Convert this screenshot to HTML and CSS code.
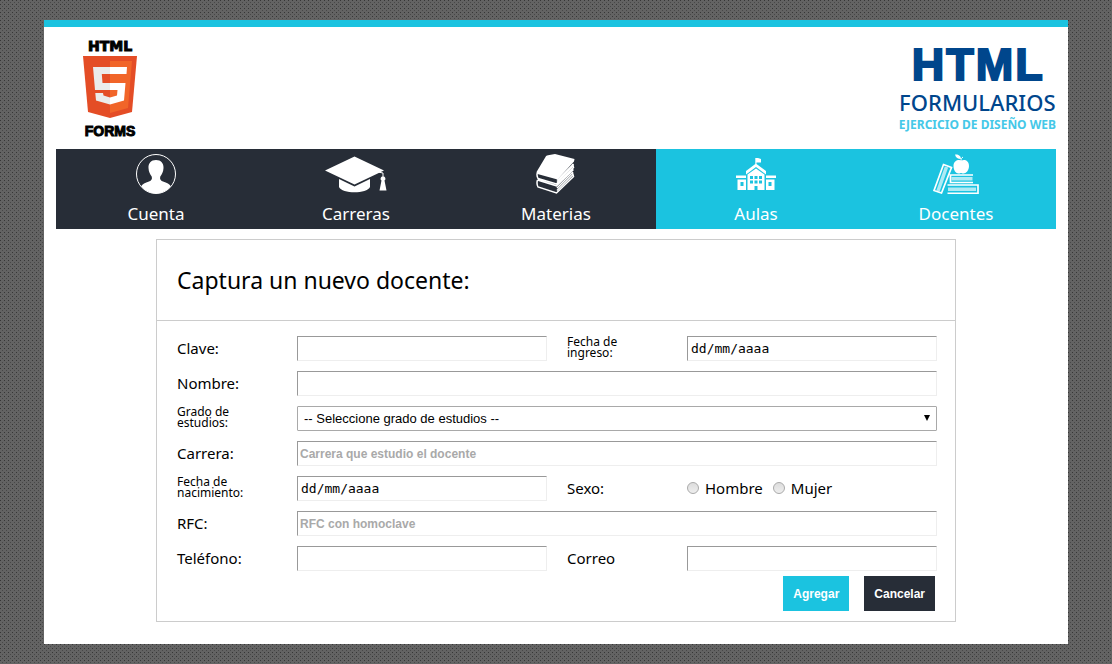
FILE: index.html
```
<!DOCTYPE html>
<html lang="es">
<head>
<meta charset="utf-8">
<meta name="viewport" content="width=device-width, initial-scale=1">
<title>HTML Formularios</title>
<link rel="stylesheet" href="styles.css">
</head>
<body>
<div class="page">
  <header class="header">
    <svg class="logo" viewBox="0 0 56 98" role="img" aria-label="HTML5 Forms">
      <text class="logo-top" x="28" y="11" text-anchor="middle">HTML</text>
      <path fill="#e44d26" d="M1 16H55L50 72L28 78L6 72Z"/>
      <path fill="#f16529" d="M28 21H50L46 68L28 73Z"/>
      <path fill="#ebebeb" d="M28 27H11L13 50H28V43H20.500L19.800 34H28ZM28 57.500L21.500 55.500L21 53H13.300L14 60.500L28 64.500Z"/>
      <path fill="#fff" d="M28 27H45L44.500 34H28ZM28 43H43.500L42 60.500L28 64.500V57.500L35 55.500L35.500 50H28Z"/>
      <text class="logo-bottom" x="28" y="96" text-anchor="middle">FORMS</text>
    </svg>
    <div class="brand">
      <div class="brand-html"><span>H</span><span>T</span><span>M</span><span>L</span></div>
      <div class="brand-forms">FORMULARIOS</div>
      <div class="brand-sub">EJERCICIO DE DISEÑO WEB</div>
    </div>
  </header>

  <nav class="nav">
    <a class="nav-item" href="#cuenta">
      <svg class="nav-icon" viewBox="0 0 40 40"><circle cx="20" cy="20" r="19.500" fill="none" stroke="#fff"/><path fill="#fff" d="M20 6C15 6 12.200 9.500 12.500 14C12.700 18 14 20 15.700 22.500C16.500 25 15.500 26.500 13 27.500C9 29 6.500 30 5.200 32.200C9 37 14 39.300 20 39.300S31 37 34.800 32.200C33.500 30 31 29 27 27.500C24.500 26.500 23.500 25 24.300 22.500C26 20 27.300 18 27.500 14C27.800 9.500 25 6 20 6Z"/></svg>
      <span>Cuenta</span>
    </a>
    <a class="nav-item" href="#carreras">
      <svg class="nav-icon nav-icon-wide" viewBox="0 0 62 40"><path fill="#fff" d="M0 16.500L29.500 2.500L59 16.500L29.500 30.500ZM14 25L29.500 32.500L45 25V33C42 40 17 40 14 33Z"/><path fill="none" stroke="#fff" d="M45 16.500L58 19V24"/><path fill="#fff" d="M58 22.500A2.200 2.200 0 0 1 59.500 26.500L61.500 36.500H54.500L56.500 26.500A2.200 2.200 0 0 1 58 22.500Z"/></svg>
      <span>Carreras</span>
    </a>
    <a class="nav-item" href="#materias">
      <svg class="nav-icon" viewBox="0 0 40 40"><g fill="none" stroke="#fff" stroke-width="1.500"><path d="M1.500 26C.5 29 1 31 2 33L20.500 39L37.500 22.500L36.500 19"/><path d="M1.500 26L20.500 31.800L37.500 15.500M1.500 18.500C.5 20.500 1 22.500 2 24.500L20.500 30L37.500 13.500L36.500 10"/><path d="M21 34L37 18M21 36.500L37 20.500M21 26.500L37.500 10M21 28.500L37.500 11.500"/></g><path fill="#fff" d="M.5 18L9.500 3C10 1.800 10.800 1.500 12 1.200L19 0L38.500 5L38 7.500L21.500 25.500L1.500 20Z"/></svg>
      <span>Materias</span>
    </a>
    <a class="nav-item nav-item-active" href="#aulas">
      <svg class="nav-icon" viewBox="0 0 40 40"><path fill="#fff" d="M19.300 4H22L25 5V8.500H20.500V10L30 17V20.500L20 13L10 20.500V17L19.300 10ZM0 21.500H10V24H0ZM30 21.500H40V24H30ZM1.500 25.500H10V36H1.500ZM30 25.500H38.500V36H30ZM11.500 20.500L20 14.500L28.500 20.500V36H11.500Z"/><path fill="#1bc3e0" d="M14 22h3v3h-3zM18.500 22h3v3h-3zM23 22h3v3h-3zM14 26.500h3v3h-3zM18.500 26.500h3v3h-3zM23 26.500h3v3h-3zM18.500 32h3v4h-3zM4.500 28h3v4h-3zM32.500 28h3v4h-3z"/></svg>
      <span>Aulas</span>
    </a>
    <a class="nav-item nav-item-active" href="#docentes">
      <svg class="nav-icon nav-icon-books" viewBox="0 0 46 40"><path fill="#fff" d="M28.500 6.500C31.500 5 36 6.500 36 12C36 16.500 33 19.500 30.500 19.500C29 19.500 28.500 19 28 19C27.500 19 27 19.500 25.500 19.500C23 19.500 20.500 16.500 20.500 12C20.500 6.500 25.500 5 28.500 6.500ZM28 5C25 5 22.500 3.500 22 .5C25 0 28 1.500 28 5Z"/><path fill="none" stroke="#fff" d="M28 7C28 5 28.500 4 30 3"/><g fill="none" stroke="#fff"><path stroke-width="1.700" d="M40 21H17.500V28.500H40M14.500 31H45V39.300H14.500M10.500 10.500L18.500 13.500L8.500 39L1 36.500Z"/><path stroke-width="3.500" opacity=".65" d="M18.500 24.800H39.500M15 35.200H43M13.500 13L5 37"/></g></svg>
      <span>Docentes</span>
    </a>
  </nav>

  <main class="panel">
    <h1 class="panel-title">Captura un nuevo docente:</h1>
    <form class="form">
      <label class="label" for="clave">Clave:</label>
      <input class="field" id="clave" type="text">
      <label class="label label-small" for="ingreso">Fecha de ingreso:</label>
      <input class="field field-date" id="ingreso" type="text" placeholder="dd/mm/aaaa">

      <label class="label" for="nombre">Nombre:</label>
      <input class="field field-wide" id="nombre" type="text">

      <label class="label label-small" for="grado">Grado de estudios:</label>
      <div class="select-wrap field-wide">
        <select class="select" id="grado"><option>-- Seleccione grado de estudios --</option></select>
        <svg class="select-arrow" viewBox="0 0 6 6"><path d="M0 0H6L3 6Z"/></svg>
      </div>

      <label class="label" for="carrera">Carrera:</label>
      <input class="field field-wide" id="carrera" type="text" placeholder="Carrera que estudio el docente">

      <label class="label label-small" for="nacimiento">Fecha de nacimiento:</label>
      <input class="field field-date" id="nacimiento" type="text" placeholder="dd/mm/aaaa">
      <span class="label" id="sexo">Sexo:</span>
      <div class="radios" role="radiogroup" aria-labelledby="sexo">
        <label class="label radio-label"><input class="radio" type="radio" name="sexo">Hombre</label>
        <label class="label radio-label"><input class="radio" type="radio" name="sexo">Mujer</label>
      </div>

      <label class="label" for="rfc">RFC:</label>
      <input class="field field-wide" id="rfc" type="text" placeholder="RFC con homoclave">

      <label class="label" for="telefono">Teléfono:</label>
      <input class="field" id="telefono" type="text">
      <label class="label" for="correo">Correo</label>
      <input class="field" id="correo" type="text">
    </form>
    <div class="actions">
      <button class="button button-primary" type="button">Agregar</button>
      <button class="button" type="button">Cancelar</button>
    </div>
  </main>
</div>
</body>
</html>
```
FILE: styles.css
```
* {
  box-sizing: border-box;
}

body {
  margin: 0;
  padding: 20px;
  color: #000;
  font: 15px/25px "Noto Sans", sans-serif;
  background-color: #636363;
  background-image:
    conic-gradient(at 1px 1px, transparent 75%, #363636 0),
    conic-gradient(at 1px 1px, transparent 75%, #484848 0);
  background-size: 4px 4px;
  background-position: 0 0, 2px 2px;
}

.page {
  max-width: 1024px;
  margin: 0 auto;
  padding: 0 12px 22px;
  background: #fff;
  border-top: 7px solid #1bc3e0;
}

.header {
  display: flex;
  justify-content: space-between;
  padding: 13px 0 11px 26px;
}

.logo {
  width: 56px;
  height: 98px;
  overflow: visible;
}

.logo-top {
  font: bold 14px "DejaVu Sans", sans-serif;
  stroke: #000;
}

.logo-bottom {
  font: bold 14px "Liberation Sans", sans-serif;
  stroke: #000;
}

.brand {
  text-align: center;
  color: #00468c;
}

.brand-html {
  display: flex;
  justify-content: center;
  gap: 2px;
  font: bold 45px/50px "Liberation Sans", sans-serif;
  -webkit-text-stroke: 2px #00468c;
}

.brand-forms {
  font: 500 22px/24px "Noto Sans", sans-serif;
}

.brand-sub {
  color: #45c8e8;
  font: bold 12px/22px "Noto Sans", sans-serif;
}

.nav {
  display: grid;
  grid-template-columns: repeat(5, 1fr);
}

.nav-item {
  display: flex;
  flex-direction: column;
  align-items: center;
  gap: 7px;
  padding: 5px 0 3px;
  color: #fff;
  font-size: 17px;
  text-decoration: none;
  background: #272d37;
}

.nav-item-active {
  background: #1bc3e0;
}

.nav-icon {
  width: 40px;
  height: 40px;
}

.nav-icon-wide {
  width: 62px;
}

.nav-icon-books {
  width: 46px;
}

.panel {
  width: 80%;
  margin: 10px auto 0;
  border: 1px solid #ccc;
}

.panel-title {
  margin: 0;
  padding: 20px;
  font-size: 23px;
  font-weight: 400;
  line-height: 40px;
  border-bottom: 1px solid #ccc;
}

.form {
  display: grid;
  grid-template-columns: 2fr 5fr 2fr 5fr;
  grid-auto-rows: 25px;
  gap: 10px 20px;
  padding: 15px 18px 5px 20px;
}

.label {
  line-height: 25px;
}

.label-small {
  padding-right: 20px;
  font-size: 12px;
  line-height: 11px;
}

.field,
.select {
  display: block;
  width: 100%;
  min-width: 0;
  height: 25px;
  margin: 0;
  padding: 0 2px;
  font: 13px "Liberation Sans", sans-serif;
  background: #fff;
  border: 1px solid;
  border-color: #999 #eee #eee #999;
}

.field::placeholder {
  color: #a9a9a9;
  font-size: 12px;
  font-weight: 700;
  opacity: 1;
}

.field-date {
  padding: 0 3px;
  font: 13px "DejaVu Sans Mono", monospace;
}

.field-date::placeholder {
  color: #000;
  font-size: 13px;
  font-weight: 400;
}

.field-wide {
  grid-column: span 3;
}

.select-wrap {
  position: relative;
}

.select {
  padding: 0 6px;
  color: #000;
  border-color: #a9a9a9;
  border-radius: 1px;
  appearance: none;
}

.select-arrow {
  position: absolute;
  top: 9px;
  right: 7px;
  width: 6px;
  height: 6px;
}

.radios {
  display: flex;
  gap: 10px;
}

.radio-label {
  display: flex;
  gap: 6px;
}

.radio {
  width: 12px;
  height: 12px;
  margin: 6px 0 0;
  background: linear-gradient(#ddd, #eee);
  border: 1px solid #aaa;
  border-radius: 50%;
  appearance: none;
}

.radio:checked {
  background: #444;
}

.actions {
  display: flex;
  justify-content: flex-end;
  gap: 15px;
  padding: 0 20px 10px;
}

.button {
  height: 35px;
  padding: 0 10px;
  color: #fff;
  font: bold 12px "Liberation Sans", sans-serif;
  background: #272d37;
  border: 0;
}

.button-primary {
  background: #1bc3e0;
}
```
